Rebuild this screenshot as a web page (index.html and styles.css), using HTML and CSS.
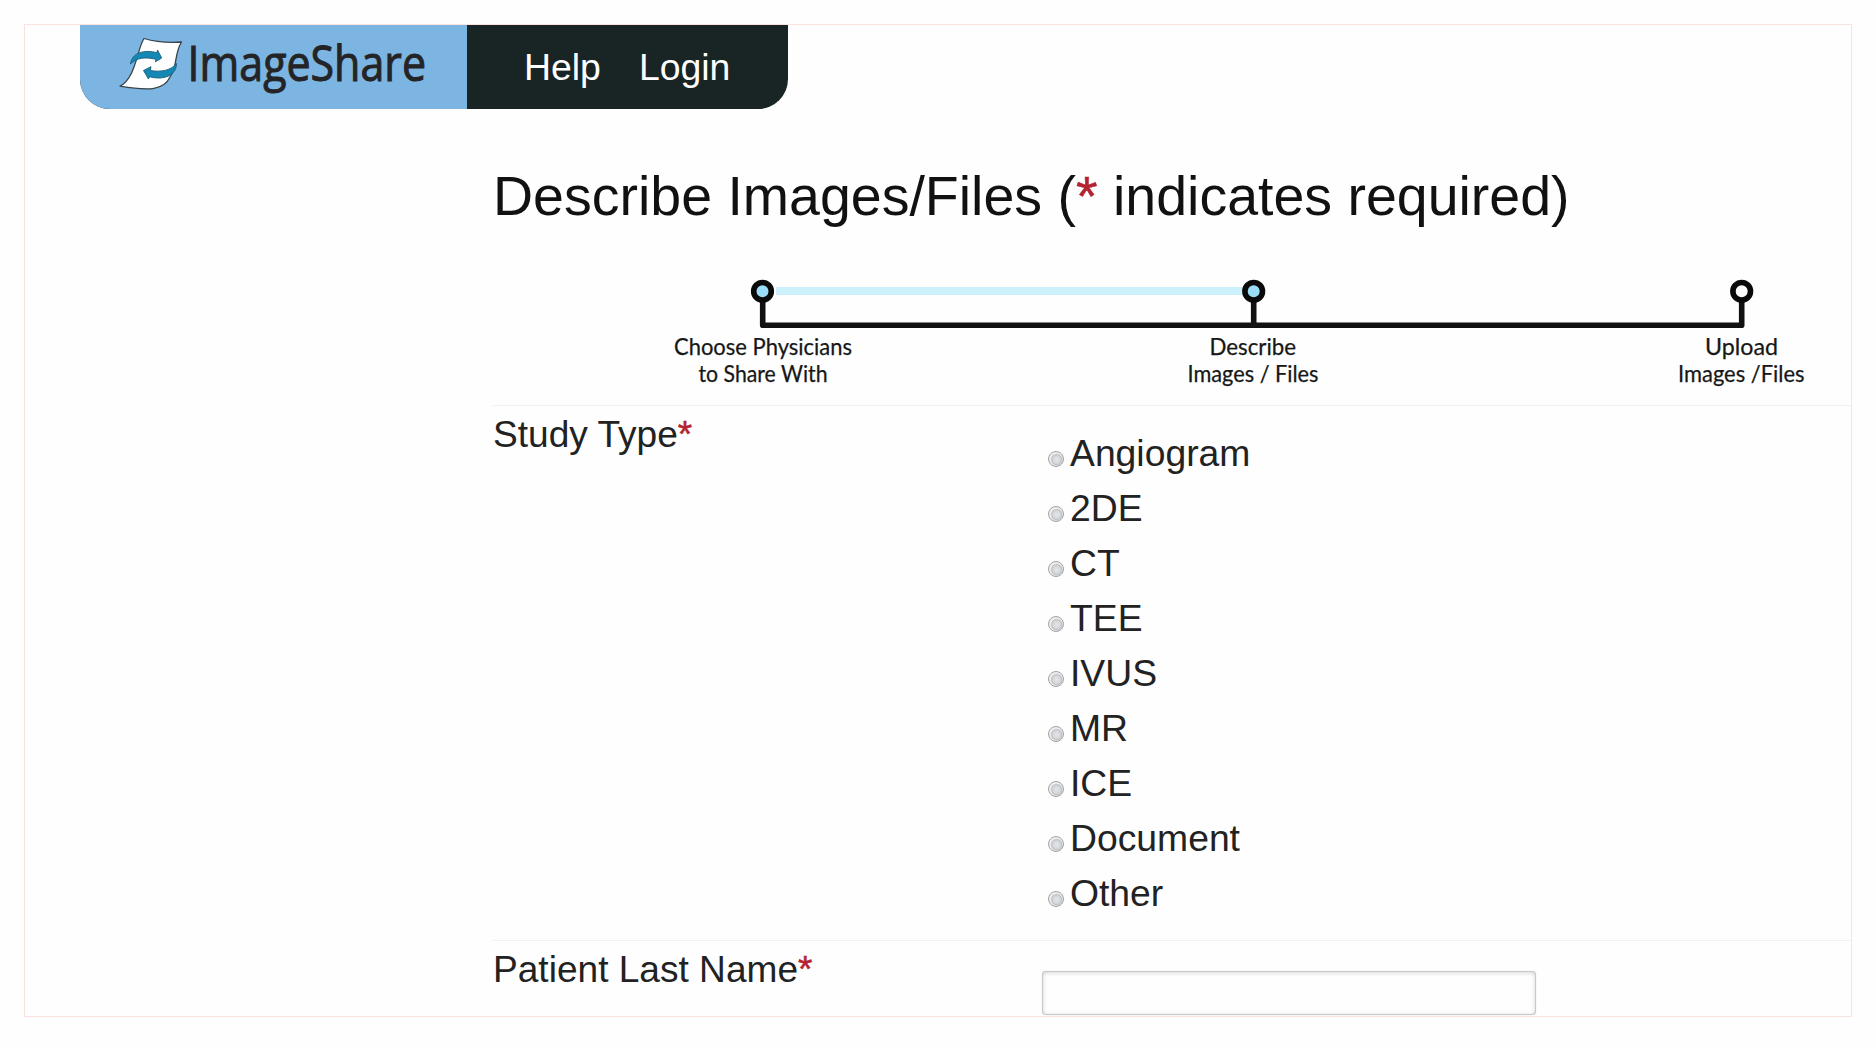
FILE: index.html
```html
<!DOCTYPE html>
<html lang="en">
<head>
<meta charset="utf-8">
<title>ImageShare - Describe Images/Files</title>
<link rel="stylesheet" href="styles.css">
</head>
<body>
<div class="frame">
  <header class="topbar">
    <a class="brand">
      <svg width="387" height="84" viewBox="80 25 387 84" role="img" aria-label="ImageShare">
        <path d="M144 38.5 Q161 43.500 181.500 42 C174 54 178 65 170 77 C164 90 150 91 120 86.200 C136 78 137 49 144 38.500Z" fill="#fff" stroke="#39434a" stroke-width="1.3" stroke-linejoin="round"/>
        <path d="M130.500 64 C132 52 145 49.500 157 52.700 L157.500 50 L161.700 58 L155.400 61.800 L156 59.200 C145 57 137 57.500 130.500 64Z" fill="#1488b5" stroke="#1b5d78" stroke-width=".9"/>
        <path d="M176.500 63.500 C176.500 76 163 80.500 149.500 76.700 L148.500 79 L143.500 70.500 L151 66.700 L150.300 70.500 C161 72.300 171 70.500 176.500 63.500Z" fill="#1488b5" stroke="#1b5d78" stroke-width=".9"/>
        <text class="brand-name" x="187.500" y="81" textLength="238.500" lengthAdjust="spacingAndGlyphs">ImageShare</text>
      </svg>
    </a>
    <nav class="menu">
      <a>Help</a>
      <a>Login</a>
    </nav>
  </header>
  <main class="content">
    <h1 class="title">Describe Images/Files (<span class="required">*</span> indicates required)</h1>
    <svg class="steps" width="1358" height="135" viewBox="493 270 1358 135">
      <path d="M776 291H1243" stroke="#cdf0fd" stroke-width="8"/>
      <path d="M762.700 300V325.200H1741.700V300M1253.700 300V325.200" fill="none" stroke="#111" stroke-width="5.600" stroke-linejoin="round"/>
      <g stroke="#0a0a0a" stroke-width="5.600">
        <circle cx="762.500" cy="291.300" r="8.800" fill="#9bdcf8"/>
        <circle cx="1253.700" cy="291.300" r="8.800" fill="#9bdcf8"/>
        <circle cx="1741.700" cy="291.300" r="8.800" fill="#fefefe"/>
      </g>
      <g class="step-label">
        <text x="674" y="354.500" textLength="178" lengthAdjust="spacingAndGlyphs">Choose Physicians</text>
        <text x="698.500" y="381.500" textLength="129" lengthAdjust="spacingAndGlyphs">to Share With</text>
        <text x="1209.500" y="354.500" textLength="86.500" lengthAdjust="spacingAndGlyphs">Describe</text>
        <text x="1187.500" y="381.500" textLength="131" lengthAdjust="spacingAndGlyphs">Images / Files</text>
        <text x="1705" y="354.500" textLength="73" lengthAdjust="spacingAndGlyphs">Upload</text>
        <text x="1678" y="381.500" textLength="126.500" lengthAdjust="spacingAndGlyphs">Images /Files</text>
      </g>
    </svg>
    <form>
      <div class="row study">
        <div class="label">Study Type<span class="required">*</span></div>
        <div class="options">
          <label><input type="radio" name="study">Angiogram</label>
          <label><input type="radio" name="study">2DE</label>
          <label><input type="radio" name="study">CT</label>
          <label><input type="radio" name="study">TEE</label>
          <label><input type="radio" name="study">IVUS</label>
          <label><input type="radio" name="study">MR</label>
          <label><input type="radio" name="study">ICE</label>
          <label><input type="radio" name="study">Document</label>
          <label><input type="radio" name="study">Other</label>
        </div>
      </div>
      <div class="row">
        <label class="label" for="last-name">Patient Last Name<span class="required">*</span></label>
        <div class="field"><input class="textbox" id="last-name" type="text"></div>
      </div>
    </form>
  </main>
</div>
</body>
</html>
```
FILE: styles.css
```css
* { box-sizing: border-box; }
body {
  margin: 0;
  padding: 24px;
  background: #fefefe;
  color: #222;
  font-family: "Liberation Sans", Arial, sans-serif;
  font-size: 37.3px;
}
.frame {
  width: 1828px;
  height: 993px;
  border: 1px solid #f8e3e0;
  overflow: hidden;
}
.topbar {
  display: flex;
  width: 708px;
  height: 84px;
  margin-left: 55px;
  border-radius: 0 0 30px 30px;
  overflow: hidden;
  background: #192424;
}
.brand { width: 387px; background: #7cb5e2; }
.brand svg { display: block; }
.brand-name {
  font-family: "Open Sans", sans-serif;
  font-size: 48.5px;
  font-weight: 500;
  fill: #242427;
  stroke: #242427;
  stroke-width: 1px;
}
.menu {
  display: flex;
  align-items: center;
  gap: 38px;
  padding-left: 57px;
  color: #fff;
  font-size: 37.4px;
}
.content { margin-left: 468px; }
.title {
  margin: 0;
  padding: 55px 0 42px;
  font-size: 55.5px;
  font-weight: 400;
  line-height: 64px;
  color: #111;
  white-space: nowrap;
}
.required {
  display: inline-block;
  width: .39em;
  color: #b32430;
  font-weight: 400;
  line-height: 1;
  -webkit-text-stroke: .5px #b32430;
}
.steps { display: block; }
.step-label {
  font-family: Lato, sans-serif;
  font-size: 22.5px;
  fill: #171717;
  stroke: #171717;
  stroke-width: .25px;
}
.row {
  display: grid;
  grid-template-columns: 549px 1fr;
  align-items: start;
  border-top: 1px solid #f1f1f1;
}
.study { height: 535px; }
.label {
  padding-top: 7px;
  font-size: 37.1px;
  line-height: 43px;
  white-space: nowrap;
}
.options { padding: 20px 0 0 6px; }
.options label {
  display: flex;
  align-items: center;
  gap: 6px;
  height: 55px;
}
.options input {
  appearance: none;
  width: 16px;
  height: 16px;
  margin: 11px 0 0;
  border: 1px solid #a3a3a3;
  border-radius: 50%;
  background: radial-gradient(circle at 55% 55%, #e4e6e9 0, #d3d6da 36%, #bfc1c4 46%, #ededed 58%);
}
.field { padding-top: 30px; }
.textbox {
  display: block;
  width: 494px;
  height: 44px;
  border: 1px solid #c8c8c8;
  border-radius: 4px;
  background: #fefefe;
  box-shadow: inset 0 1px 4px rgba(0, 0, 0, .16), 0 0 1px rgba(0, 0, 0, .25);
  font: inherit;
}
```
